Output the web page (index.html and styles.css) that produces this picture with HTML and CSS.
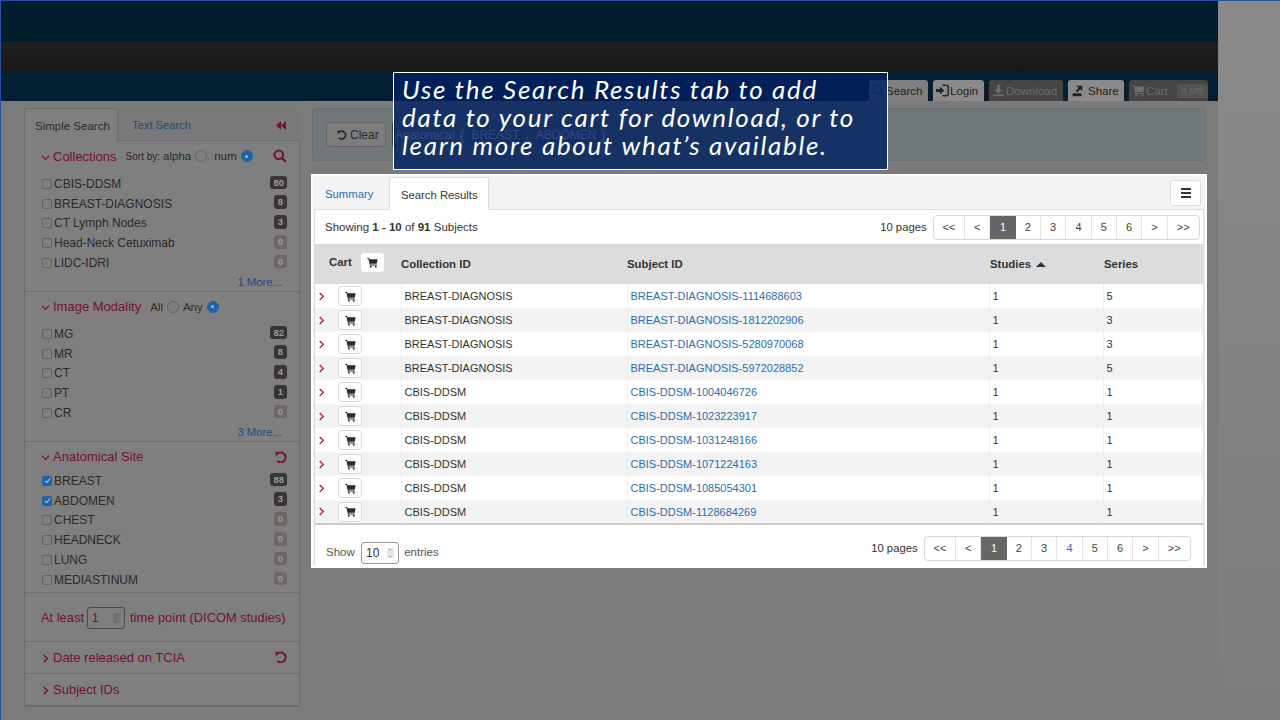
FILE: index.html
```html
<!DOCTYPE html>
<html lang="en">

<head>
  <meta charset="UTF-8">
  <meta name="viewport" content="width=device-width, initial-scale=1.0">
  <title>Search Results</title>
  <link rel="stylesheet" href="styles.css">
</head>

<body>
  <svg class="icon-defs" xmlns="http://www.w3.org/2000/svg">
    <symbol id="cart" viewBox="0 0 16 16">
      <path d="M0.5 1.5h2.6l0.5 1.7h11.9l-1.5 6.6H5.2l0.3 1.2h8.7v1.4H4.3L2.1 2.9H0.5z"/>
      <circle cx="5.6" cy="14" r="1.4"/>
      <circle cx="12.8" cy="14" r="1.4"/>
    </symbol>
    <symbol id="undo" viewBox="0 0 16 16">
      <path d="M3.6 3.2A6.2 6.2 0 1 1 3 12.6" fill="none" stroke="currentColor" stroke-width="2.6"/>
      <path d="M0.8 1.2L6.6 1.2 0.8 7z"/>
    </symbol>
    <symbol id="search" viewBox="0 0 16 16">
      <circle cx="6.6" cy="6.6" r="4.9" fill="none" stroke="currentColor" stroke-width="2.2"/>
      <path d="M10 10l4.6 4.6" fill="none" stroke="currentColor" stroke-width="2.6"/>
    </symbol>
    <symbol id="chev-down" viewBox="0 0 10 10">
      <path d="M1 3l4 4 4-4" fill="none" stroke="currentColor" stroke-width="1.3"/>
    </symbol>
    <symbol id="chev-right" viewBox="0 0 10 10">
      <path d="M3 1l4 4-4 4" fill="none" stroke="currentColor" stroke-width="1.5"/>
    </symbol>
  </svg>

  <div class="slide">
    <div class="app">
      <header class="header">
        <div class="header-top"></div>
        <div class="header-band"></div>
        <nav class="header-nav">
          <a class="nav-tab nav-active"><svg class="nav-icon nav-search"><use href="#search"/></svg>Search</a>
          <a class="nav-tab nav-login">
            <svg class="nav-icon" viewBox="0 0 16 16"><path d="M0 6.2h5V3.4L10 8l-5 4.6V9.8H0z"/><path d="M8 1.5h4.5a2.5 2.5 0 0 1 2.5 2.5v8a2.5 2.5 0 0 1-2.5 2.5H8" fill="none" stroke="currentColor" stroke-width="1.8"/></svg>Login
          </a>
          <a class="nav-tab nav-off nav-download">
            <svg class="nav-icon" viewBox="0 0 16 16"><path d="M6 1h4v6h3l-5 5-5-5h3z"/><path d="M1 13h14v2H1z"/></svg>Download
          </a>
          <a class="nav-tab nav-share">
            <svg class="nav-icon" viewBox="0 0 16 16"><path d="M6 2h8v7l-2.6-2.6L7.6 10.2 5.8 8.4l3.8-3.8z"/><path d="M2 11.5h11v3.5H2z"/></svg>Share
          </a>
          <a class="nav-tab nav-off nav-cart">
            <svg class="nav-icon"><use href="#cart"/></svg>Cart<span class="nav-size">0 MB</span>
          </a>
        </nav>
      </header>

      <main class="main">
        <aside class="sidebar">
          <div class="side-tabs">
            <a class="side-tab side-tab-active">Simple Search</a>
            <a class="side-tab">Text Search</a>
            <svg class="collapse-icon" viewBox="0 0 12 10"><path d="M6 0v10L0 5zM12 0v10L6 5z"/></svg>
          </div>

          <section class="facet facet-first">
            <div class="facet-head">
              <svg class="chev"><use href="#chev-down"/></svg>
              <h4 class="facet-title">Collections</h4>
              <span class="sort-label">Sort by:</span>
              <span class="opt">alpha</span><i class="radio"></i>
              <span class="opt opt-gap">num</span><i class="radio radio-on"></i>
              <svg class="facet-action"><use href="#search"/></svg>
            </div>
            <ul class="facet-list">
              <li><i class="check"></i>CBIS-DDSM<b class="badge">80</b></li>
              <li><i class="check"></i>BREAST-DIAGNOSIS<b class="badge">8</b></li>
              <li><i class="check"></i>CT Lymph Nodes<b class="badge">3</b></li>
              <li><i class="check"></i>Head-Neck Cetuximab<b class="badge badge-zero">0</b></li>
              <li><i class="check"></i>LIDC-IDRI<b class="badge badge-zero">0</b></li>
            </ul>
            <a class="more">1 More...</a>
          </section>

          <section class="facet">
            <div class="facet-head">
              <svg class="chev"><use href="#chev-down"/></svg>
              <h4 class="facet-title">Image Modality</h4>
              <span class="opt opt-all">All</span><i class="radio"></i>
              <span class="opt opt-any">Any</span><i class="radio radio-on"></i>
            </div>
            <ul class="facet-list">
              <li><i class="check"></i>MG<b class="badge">82</b></li>
              <li><i class="check"></i>MR<b class="badge">8</b></li>
              <li><i class="check"></i>CT<b class="badge">4</b></li>
              <li><i class="check"></i>PT<b class="badge">1</b></li>
              <li><i class="check"></i>CR<b class="badge badge-zero">0</b></li>
            </ul>
            <a class="more">3 More...</a>
          </section>

          <section class="facet facet-sites">
            <div class="facet-head">
              <svg class="chev"><use href="#chev-down"/></svg>
              <h4 class="facet-title">Anatomical Site</h4>
              <svg class="facet-action facet-undo"><use href="#undo"/></svg>
            </div>
            <ul class="facet-list">
              <li><i class="check check-on"></i>BREAST<b class="badge">88</b></li>
              <li><i class="check check-on"></i>ABDOMEN<b class="badge">3</b></li>
              <li><i class="check"></i>CHEST<b class="badge badge-zero">0</b></li>
              <li><i class="check"></i>HEADNECK<b class="badge badge-zero">0</b></li>
              <li><i class="check"></i>LUNG<b class="badge badge-zero">0</b></li>
              <li><i class="check"></i>MEDIASTINUM<b class="badge badge-zero">0</b></li>
            </ul>
          </section>

          <section class="facet timepoint">
            At least
            <span class="spin spin-dark">1<i class="spin-arrows"></i></span>
            time point (DICOM studies)
          </section>

          <section class="facet facet-closed">
            <svg class="chev"><use href="#chev-right"/></svg>
            <h4 class="facet-title">Date released on TCIA</h4>
            <svg class="facet-action facet-undo"><use href="#undo"/></svg>
          </section>

          <section class="facet facet-closed">
            <svg class="chev"><use href="#chev-right"/></svg>
            <h4 class="facet-title">Subject IDs</h4>
          </section>
        </aside>

        <div class="content">
          <div class="filter-bar">
            <a class="clear-btn"><svg class="clear-icon"><use href="#undo"/></svg>Clear</a>
            <span class="query-btn"></span>
            <span class="query-name">Anatomical</span>
            <span class="query-paren">(</span>
            <span class="query-chip">BREAST</span>
            <span class="query-comma">,</span>
            <span class="query-chip">ABDOMEN</span>
            <span class="query-paren">)</span>
          </div>

          <div class="results">
            <div class="results-tabs">
              <a class="res-tab">Summary</a>
              <a class="res-tab res-tab-active">Search Results</a>
              <a class="menu-btn"><i></i><i></i><i></i></a>
            </div>

            <div class="results-body">
              <div class="results-info">
                <span>Showing <b>1 - 10</b> of <b>91</b> Subjects</span>
                <div class="pager-wrap">
                  <span class="pages-label">10 pages</span>
                  <div class="pager">
                    <a class="pg-wide">&lt;&lt;</a><a>&lt;</a><a class="pg-on">1</a><a>2</a><a>3</a><a>4</a><a>5</a><a>6</a><a>&gt;</a><a class="pg-wide">&gt;&gt;</a>
                  </div>
                </div>
              </div>

              <table class="grid">
                <thead>
                  <tr>
                    <th class="col-cart"><span class="cart-head">Cart<a class="cart-all"><svg class="cart-icon"><use href="#cart"/></svg></a></span></th>
                    <th class="col-coll">Collection ID</th>
                    <th class="col-subj">Subject ID</th>
                    <th class="col-stud">Studies <i class="sort-up"></i></th>
                    <th class="col-series">Series</th>
                  </tr>
                </thead>
                <tbody>
                  <tr><td class="cell-cart"><svg class="row-chev"><use href="#chev-right"/></svg><a class="cart-btn"><svg class="cart-icon"><use href="#cart"/></svg></a></td><td>BREAST-DIAGNOSIS</td><td><a class="subj">BREAST-DIAGNOSIS-1114688603</a></td><td>1</td><td>5</td></tr>
                  <tr><td class="cell-cart"><svg class="row-chev"><use href="#chev-right"/></svg><a class="cart-btn"><svg class="cart-icon"><use href="#cart"/></svg></a></td><td>BREAST-DIAGNOSIS</td><td><a class="subj">BREAST-DIAGNOSIS-1812202906</a></td><td>1</td><td>3</td></tr>
                  <tr><td class="cell-cart"><svg class="row-chev"><use href="#chev-right"/></svg><a class="cart-btn"><svg class="cart-icon"><use href="#cart"/></svg></a></td><td>BREAST-DIAGNOSIS</td><td><a class="subj">BREAST-DIAGNOSIS-5280970068</a></td><td>1</td><td>3</td></tr>
                  <tr><td class="cell-cart"><svg class="row-chev"><use href="#chev-right"/></svg><a class="cart-btn"><svg class="cart-icon"><use href="#cart"/></svg></a></td><td>BREAST-DIAGNOSIS</td><td><a class="subj">BREAST-DIAGNOSIS-5972028852</a></td><td>1</td><td>5</td></tr>
                  <tr><td class="cell-cart"><svg class="row-chev"><use href="#chev-right"/></svg><a class="cart-btn"><svg class="cart-icon"><use href="#cart"/></svg></a></td><td>CBIS-DDSM</td><td><a class="subj">CBIS-DDSM-1004046726</a></td><td>1</td><td>1</td></tr>
                  <tr><td class="cell-cart"><svg class="row-chev"><use href="#chev-right"/></svg><a class="cart-btn"><svg class="cart-icon"><use href="#cart"/></svg></a></td><td>CBIS-DDSM</td><td><a class="subj">CBIS-DDSM-1023223917</a></td><td>1</td><td>1</td></tr>
                  <tr><td class="cell-cart"><svg class="row-chev"><use href="#chev-right"/></svg><a class="cart-btn"><svg class="cart-icon"><use href="#cart"/></svg></a></td><td>CBIS-DDSM</td><td><a class="subj">CBIS-DDSM-1031248166</a></td><td>1</td><td>1</td></tr>
                  <tr><td class="cell-cart"><svg class="row-chev"><use href="#chev-right"/></svg><a class="cart-btn"><svg class="cart-icon"><use href="#cart"/></svg></a></td><td>CBIS-DDSM</td><td><a class="subj">CBIS-DDSM-1071224163</a></td><td>1</td><td>1</td></tr>
                  <tr><td class="cell-cart"><svg class="row-chev"><use href="#chev-right"/></svg><a class="cart-btn"><svg class="cart-icon"><use href="#cart"/></svg></a></td><td>CBIS-DDSM</td><td><a class="subj">CBIS-DDSM-1085054301</a></td><td>1</td><td>1</td></tr>
                  <tr><td class="cell-cart"><svg class="row-chev"><use href="#chev-right"/></svg><a class="cart-btn"><svg class="cart-icon"><use href="#cart"/></svg></a></td><td>CBIS-DDSM</td><td><a class="subj">CBIS-DDSM-1128684269</a></td><td>1</td><td>1</td></tr>
                </tbody>
              </table>

              <div class="results-foot">
                <div class="show-entries">Show <span class="spin">10<i class="spin-arrows"></i></span> entries</div>
                <div class="pager-wrap">
                  <span class="pages-label">10 pages</span>
                  <div class="pager">
                    <a class="pg-wide">&lt;&lt;</a><a>&lt;</a><a class="pg-on">1</a><a>2</a><a>3</a><a class="pg-link">4</a><a>5</a><a>6</a><a>&gt;</a><a class="pg-wide">&gt;&gt;</a>
                  </div>
                </div>
              </div>
            </div>
          </div>
        </div>
      </main>
    </div>
    <div class="slide-side"></div>

    <div class="callout">Use the Search Results tab to add<br>data to your cart for download, or to<br>learn more about what’s available.</div>
  </div>
</body>

</html>
```

FILE: styles.css
```css
/* page frame */
body {
  margin: 0;
  font-family: "Liberation Sans", Arial, sans-serif;
  font-size: 12px;
  color: #2a2a2a;
}

a {
  text-decoration: none;
}

.icon-defs {
  display: none;
}

.slide {
  position: relative;
  display: flex;
  width: 1280px;
  height: 720px;
  box-sizing: border-box;
  overflow: hidden;
  border-top: 1px solid #2a4f9e;
  border-left: 1px solid #2a4f9e;
  background-color: #7b7b7b;
}

.app {
  width: 1217px;
  flex: none;
}

.slide-side {
  flex: 1;
  background: linear-gradient(#8a8a8a, #7c7c7c);
}

/* dark header */
.header-top {
  height: 41px;
  background-color: #011c2d;
}

.header-band {
  height: 29px;
  background: linear-gradient(#212121, #191919);
}

.header-nav {
  display: flex;
  justify-content: flex-end;
  align-items: flex-end;
  gap: 3px;
  height: 30px;
  padding-right: 9px;
  box-sizing: border-box;
  background-color: #011e33;
}

.nav-tab {
  display: flex;
  align-items: center;
  height: 22px;
  padding: 0 0 0 3px;
  box-sizing: border-box;
  background-color: #8a8a8a;
  border: 1px solid #1c1c1c;
  border-bottom: none;
  border-radius: 4px 4px 0 0;
  font-size: 11.5px;
  color: #222;
  white-space: nowrap;
}

.nav-active {
  width: 61px;
  border-color: #011e33;
  background-color: #7f7f7f;
}

.nav-login {
  width: 53px;
}

.nav-download {
  width: 76px;
}

.nav-share {
  width: 58px;
  gap: 3px;
}

.nav-cart {
  width: 81px;
}

.nav-off {
  background-color: #454545;
  color: #6c6c6c;
}

.nav-icon {
  width: 13px;
  height: 13px;
  margin-right: 1px;
  fill: currentColor;
  flex: none;
}

.nav-search {
  color: #26548c;
}

.nav-size {
  margin-left: 9px;
  padding: 2px 5px;
  border-radius: 3px;
  background-color: #545454;
  font-size: 9px;
  color: #6a6a6a;
}

/* main area */
.main {
  display: flex;
  align-items: flex-start;
  gap: 12px;
  padding: 7px 11px 0 23px;
}

.sidebar {
  width: 276px;
  flex: none;
  box-sizing: border-box;
  border: 1px solid #6e6e6e;
  border-top: none;
  background-color: #7f7f7f;
}

.side-tabs {
  display: flex;
  align-items: stretch;
  height: 33px;
  margin: 0 -1px;
  box-sizing: border-box;
  background-color: #797979;
  border-bottom: 1px solid #6e6e6e;
}

.side-tab {
  padding: 11px 0 0 14px;
  font-size: 11.2px;
  color: #1f4a78;
  white-space: nowrap;
}

.side-tab-active {
  width: 94px;
  box-sizing: border-box;
  padding-left: 10px;
  margin-bottom: -1px;
  background-color: #7f7f7f;
  border: 1px solid #6e6e6e;
  border-bottom: none;
  border-radius: 3px 3px 0 0;
  font-size: 11.5px;
  color: #2a2a2a;
}

.collapse-icon {
  width: 10px;
  height: 9px;
  margin: 13px 14px 0 auto;
  fill: #741030;
}

.facet {
  padding: 0 12px 0 16px;
  border-bottom: 1px solid #6e6e6e;
}

.facet-head {
  display: flex;
  align-items: center;
  height: 20px;
  margin-top: 5px;
  margin-bottom: 7px;
}

.facet-first .facet-head {
  margin-bottom: 8px;
}

.facet-sites .facet-head {
  margin-bottom: 4px;
}

.chev {
  width: 9px;
  height: 9px;
  margin-right: 3px;
  margin-top: 2px;
  color: #741030;
  flex: none;
}

.facet-title {
  margin: 0;
  font-size: 13px;
  font-weight: normal;
  color: #741030;
}

.sort-label {
  margin-left: 9px;
  font-size: 10px;
}

.opt {
  margin-left: 3px;
  margin-right: 4px;
  font-size: 11.5px;
}

.opt-gap {
  margin-left: 7px;
}

.opt-all {
  margin-left: 9px;
}

.opt-any {
  margin-left: 4px;
}

.radio {
  width: 10px;
  height: 10px;
  border: 1px solid #626262;
  border-radius: 50%;
  background-color: #7f7f7f;
  flex: none;
}

.radio-on {
  position: relative;
  border-color: #1f62a8;
  background-color: #1f62a8;
}

.radio-on::after {
  content: "";
  position: absolute;
  top: 3.5px;
  left: 3.5px;
  width: 3px;
  height: 3px;
  border-radius: 50%;
  background-color: #9db8d4;
}

.facet-action {
  width: 14px;
  height: 14px;
  margin-left: auto;
  fill: #741030;
  color: #741030;
  flex: none;
}

.facet-undo {
  width: 12.5px;
  height: 12.5px;
}

.facet-list {
  list-style: none;
  margin: 0;
  padding: 0 0 0 1px;
}

.facet-list li {
  display: flex;
  align-items: center;
  height: 19.8px;
  font-size: 12px;
}

.check {
  width: 8px;
  height: 8px;
  margin-right: 2px;
  border: 1px solid #626262;
  border-radius: 2px;
  background-color: #7f7f7f;
  flex: none;
}

.check-on {
  position: relative;
  border-color: #1f62a8;
  background-color: #1f62a8;
}

.check-on::after {
  content: "";
  position: absolute;
  top: 0;
  left: 2.5px;
  width: 2px;
  height: 5px;
  border: solid #a9c2da;
  border-width: 0 1px 1px 0;
  transform: rotate(40deg);
}

.badge {
  margin-left: auto;
  margin-top: -3px;
  min-width: 7px;
  padding: 2px 3px;
  border-radius: 3px;
  background-color: #3a3535;
  font-size: 9.5px;
  line-height: 9.5px;
  font-weight: bold;
  text-align: center;
  color: #9a9a9a;
}

.badge-zero {
  background-color: #6d6866;
  color: #9a9a9a;
}

.more {
  display: block;
  height: 18px;
  box-sizing: border-box;
  padding-top: 3px;
  padding-right: 5px;
  text-align: right;
  font-size: 11.3px;
  color: #1f4a78;
}

.facet-sites {
  padding-bottom: 2px;
}

.timepoint {
  display: flex;
  align-items: center;
  gap: 3px;
  height: 49px;
  box-sizing: border-box;
  padding-top: 2px;
  padding-right: 0;
  color: #741030;
  font-size: 12.9px;
  white-space: nowrap;
}

.spin {
  position: relative;
  display: inline-block;
  width: 38px;
  height: 22px;
  box-sizing: border-box;
  padding-left: 4px;
  line-height: 21px;
  border: 1px solid #999;
  border-radius: 3px;
  color: #333;
  font-size: 12px;
}

.spin-dark {
  margin-right: 2px;
  border-color: #4a4a4a;
  color: #741030;
}

.spin-arrows {
  position: absolute;
  top: 5px;
  right: 4px;
  width: 7px;
  height: 10px;
  border-radius: 2px;
  background-color: rgba(0, 0, 0, 0.1);
}

.spin-arrows::before {
  content: "";
  position: absolute;
  top: 1px;
  left: 2px;
  border: 1.5px solid transparent;
  border-bottom-color: #555;
  border-top: none;
}

.spin-arrows::after {
  content: "";
  position: absolute;
  bottom: 1px;
  left: 2px;
  border: 1.5px solid transparent;
  border-top-color: #555;
  border-bottom: none;
}

.facet-closed {
  display: flex;
  align-items: center;
  height: 32px;
  box-sizing: border-box;
}

/* right column */
.content {
  width: 894px;
  flex: none;
}

.filter-bar {
  display: flex;
  align-items: center;
  height: 53px;
  box-sizing: border-box;
  padding-left: 13px;
  border: 1px solid #687074;
  border-radius: 4px;
  background-color: #71787b;
  font-size: 12px;
}

.clear-btn {
  display: flex;
  align-items: center;
  width: 60px;
  height: 25px;
  box-sizing: border-box;
  padding-left: 10px;
  border: 1px solid #656565;
  border-radius: 3px;
  background-color: #7d7d7d;
  color: #2a2a2a;
}

.clear-icon {
  width: 10px;
  height: 10px;
  margin-right: 3px;
  fill: #2a2a2a;
  color: #2a2a2a;
}

.query-btn {
  width: 3px;
  height: 25px;
  margin-left: 6px;
  background-color: #3a3a3a;
  border-radius: 2px 0 0 2px;
}

.query-name {
  margin-right: 5px;
  color: #e8eeff;
}

.query-paren {
  color: #e8eeff;
  font-size: 15px;
}

.query-comma {
  margin-left: 2px;
  color: #e8eeff;
}

.query-chip {
  margin-left: 3px;
  padding: 5px 4px;
  border-radius: 3px;
  background-color: #5f6a78;
  color: #e8eeff;
}

/* white results panel */
.results {
  margin: 13px -1px 0;
  padding: 1px 1px 0;
  height: 394px;
  box-sizing: border-box;
  background-color: #f3f3f3;
  border: 2px solid #fff;
}

.results-tabs {
  display: flex;
  align-items: flex-end;
  height: 32px;
}

.res-tab {
  width: 75px;
  box-sizing: border-box;
  padding-left: 11px;
  height: 32px;
  line-height: 34px;
  font-size: 11.3px;
  color: #2a6fb8;
}

.res-tab-active {
  width: 100px;
  margin-bottom: -1px;
  height: 33px;
  background-color: #fff;
  border: 1px solid #dcdcdc;
  border-bottom-color: #fff;
  border-radius: 3px 3px 0 0;
  color: #333;
}

.menu-btn {
  display: flex;
  flex-direction: column;
  justify-content: center;
  gap: 2px;
  align-items: center;
  width: 31px;
  height: 26px;
  margin: 0 3px 3px auto;
  box-sizing: border-box;
  background-color: #fff;
  border: 1px solid #ddd;
  border-radius: 3px;
}

.menu-btn i {
  width: 10px;
  height: 2px;
  background-color: #333;
}

.results-body {
  box-sizing: border-box;
  background-color: #fff;
  border: 1px solid #dcdcdc;
  border-bottom: none;
  height: 357px;
}

.results-info {
  display: flex;
  align-items: center;
  justify-content: space-between;
  height: 34px;
  padding: 0 3px 0 10px;
  font-size: 11.5px;
  color: #333;
}

.pager-wrap {
  display: flex;
  align-items: center;
  gap: 6px;
}

.pages-label {
  font-size: 11.3px;
  color: #333;
}

.pager {
  display: flex;
  height: 23px;
  border: 1px solid #d8d8d8;
  border-radius: 4px;
}

.pager a {
  width: 25.3px;
  box-sizing: border-box;
  line-height: 23px;
  text-align: center;
  font-size: 11px;
  color: #444;
  border-right: 1px solid #e4e4e4;
}

.pager a:last-child {
  border-right: none;
}

.pager .pg-wide {
  width: 31.5px;
}

.pager .pg-on {
  background-color: #666;
  color: #fff;
  border-right: none;
}

.pager .pg-link {
  color: #2a6fb8;
}

.grid {
  width: 100%;
  table-layout: fixed;
  border-collapse: collapse;
  border-bottom: 2px solid #ccc;
  font-size: 11px;
  color: #333;
}

.grid th {
  height: 37px;
  padding: 0 0 2px;
  background-color: #dcdcdc;
  text-align: left;
  font-size: 11.4px;
  color: #333;
  border-top: 1px solid #d4d4d4;
}

.col-cart {
  width: 86px;
}

.col-coll {
  width: 226px;
}

.col-subj {
  width: 362px;
}

.col-stud {
  width: 113px;
}

.grid th.col-stud,
.grid th.col-series {
  padding-left: 1px;
}

.grid td {
  height: 24px;
  padding: 0 0 0 3px;
  box-sizing: border-box;
  border-left: 1px solid #efefef;
  white-space: nowrap;
}

.grid tbody tr:nth-child(even) td {
  background-color: #f3f3f3;
}

.grid td.cell-cart {
  padding: 0 0 0 2px;
  border-left: none;
}

.cart-head {
  display: flex;
  align-items: center;
  gap: 9px;
  padding-left: 14px;
  margin-top: -3px;
}

.cart-all {
  display: flex;
  align-items: center;
  justify-content: center;
  width: 23px;
  height: 19px;
  background-color: #fff;
  border-radius: 3px;
}

.cart-icon {
  width: 11px;
  height: 11px;
  fill: #2a2a2a;
}

.row-chev {
  width: 9px;
  height: 9px;
  color: #c2185b;
  vertical-align: middle;
  margin-right: 12px;
}

.cart-btn {
  display: inline-flex;
  align-items: center;
  justify-content: center;
  width: 24px;
  height: 20px;
  box-sizing: border-box;
  border: 1px solid #d8d8d8;
  border-radius: 4px;
  background-color: #fff;
  vertical-align: middle;
}

.subj {
  color: #2a6db0;
}

.sort-up {
  display: inline-block;
  margin-left: 2px;
  vertical-align: 1px;
  border: 5px solid transparent;
  border-top: none;
  border-bottom-color: #333;
}

.results-foot {
  display: flex;
  align-items: center;
  justify-content: space-between;
  height: 42px;
  padding: 0 12px 0 11px;
}

.show-entries {
  margin-top: 14px;
  font-size: 11.5px;
  color: #555;
}

.show-entries .spin {
  margin: 0 2px 0 3px;
  vertical-align: middle;
}

.results-foot .pager-wrap {
  margin-top: 4px;
}

/* slide annotation */
.callout {
  position: absolute;
  top: 71px;
  left: 392px;
  width: 495px;
  height: 98px;
  box-sizing: border-box;
  padding: 2px 8px;
  background-color: rgba(0, 32, 96, 0.8);
  border: 1px solid #fff;
  font-family: "Lato", "Open Sans", sans-serif;
  font-style: italic;
  font-size: 26px;
  line-height: 28px;
  letter-spacing: 1.7px;
  color: #fff;
  white-space: nowrap;
}
```
